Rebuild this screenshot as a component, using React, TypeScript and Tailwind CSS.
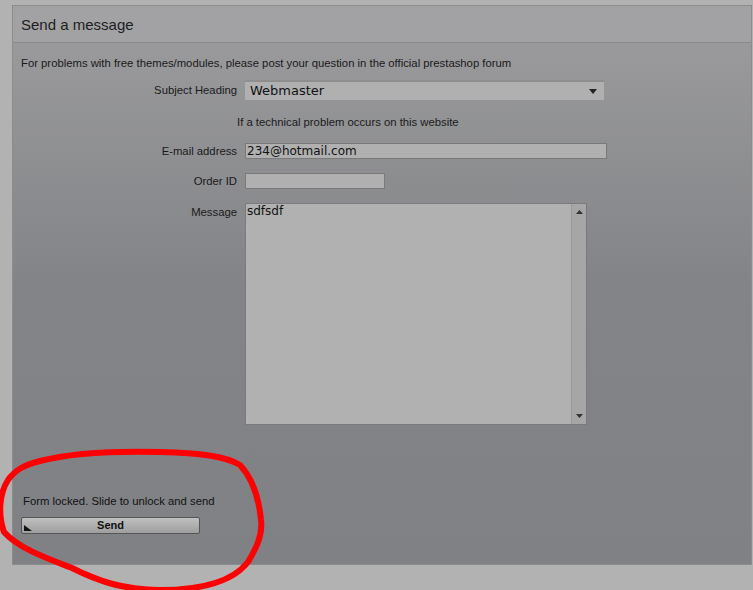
import React from "react";

const labelFont = { fontFamily: '"Liberation Sans", Arial, sans-serif' };
const inputFont = { fontFamily: '"DejaVu Sans", Verdana, sans-serif' };

function Row({ label, children, top = false }: { label: string; children: React.ReactNode; top?: boolean }) {
  return (
    <div className={`flex gap-2 ${top ? "items-start" : "items-center"}`}>
      <label className={`w-[216px] text-right text-[11.3px] leading-[16px] text-[#1a1a1a] ${top ? "pt-[1px]" : ""}`}>{label}</label>
      {children}
    </div>
  );
}

export default function App() {
  return (
    <div className="relative h-[590px] w-[753px] overflow-hidden bg-[#b2b2b2] pl-3 pt-[5px]" style={labelFont}>
      <div className="flex h-[560px] w-[740px] flex-col border border-[#8c8c8e] bg-gradient-to-b from-[#9d9d9f] via-[#838487] to-[#808185]">
        <div className="flex h-[37px] items-center border-b border-[#8a8a8c] bg-[#a2a2a4] pl-2 pt-[3px] text-[15px] text-[#1e1e1e]">
          Send a message
        </div>

        <p className="mt-[12px] pl-2 text-[11.3px] leading-[16px] text-[#1a1a1a]">
          For problems with free themes/modules, please post your question in the official prestashop forum
        </p>

        <div className="mt-[9px] flex flex-col pl-2">
          <Row label="Subject Heading">
            <div className="flex h-[20px] w-[359px] items-center justify-between border-t-2 border-[#8e8e8e] bg-[#b0b0b0] pl-[5px] pr-[7px] text-[13px] text-[#111]" style={inputFont}>
              <span>Webmaster</span>
              <svg width="8" height="5" viewBox="0 0 8 5"><path d="M0 0h8L4 5z" fill="#222" /></svg>
            </div>
          </Row>

          <div className="mt-[14px] pl-[216px] text-[11.3px] leading-[16px] text-[#1a1a1a]">If a technical problem occurs on this website</div>

          <div className="mt-[13px] flex flex-col gap-[14px]">
            <Row label="E-mail address">
              <div className="flex h-[16px] w-[362px] items-center border border-[#7a7a7a] bg-[#b0b0b0] pl-[1px] text-[12px] text-[#111]" style={inputFont}>
                234@hotmail.com
              </div>
            </Row>
            <Row label="Order ID">
              <div className="h-[16px] w-[140px] border border-[#7a7a7a] bg-[#b0b0b0]" />
            </Row>
            <Row label="Message" top>
              <div className="flex h-[222px] w-[342px] border border-[#7a7a7a] bg-[#b1b1b1]">
                <div className="flex-1 pl-[1px] text-[12px] leading-[14px] text-[#111]" style={inputFont}>
                  sdfsdf
                </div>
                <div className="flex w-[15px] flex-col items-center justify-between border-l border-[#9a9a9a] bg-[#a6a6a6] py-[6px]">
                  <svg width="7" height="4" viewBox="0 0 7 4"><path d="M0 4h7L3.5 0z" fill="#333" /></svg>
                  <svg width="7" height="4" viewBox="0 0 7 4"><path d="M0 0h7L3.5 4z" fill="#333" /></svg>
                </div>
              </div>
            </Row>
          </div>
        </div>

        <p className="mt-[68px] pl-[10px] text-[11.3px] leading-[16px] text-[#111]">Form locked. Slide to unlock and send</p>

        <div className="relative ml-[8px] mt-[8px] flex h-[17px] w-[179px] items-center justify-center rounded-[2px] border border-[#555] bg-gradient-to-b from-[#c0c0c0] to-[#9e9e9e]">
          <span className="text-[11px] font-bold text-[#111]">Send</span>
          <svg className="absolute bottom-[2px] left-[2px]" width="8" height="6" viewBox="0 0 8 6"><path d="M0 0L8 6H0z" fill="#111" /></svg>
        </div>
      </div>

      <svg className="pointer-events-none absolute left-0 top-0" width="753" height="590" viewBox="0 0 753 590">
        <path
          d="M40 461 C75 452 120 451 160 452 C200 453 225 456 240 465 C254 480 259 500 261 520 C263 536 255 550 248 562 C234 580 205 590 160 590 C122 590 96 580 72 568 C46 558 18 548 4 532 C-2 515 -1 494 8 480 C15 470 24 465 40 461 Z"
          fill="none"
          stroke="#ff0000"
          strokeWidth="6"
          strokeLinejoin="round"
        />
      </svg>
    </div>
  );
}
